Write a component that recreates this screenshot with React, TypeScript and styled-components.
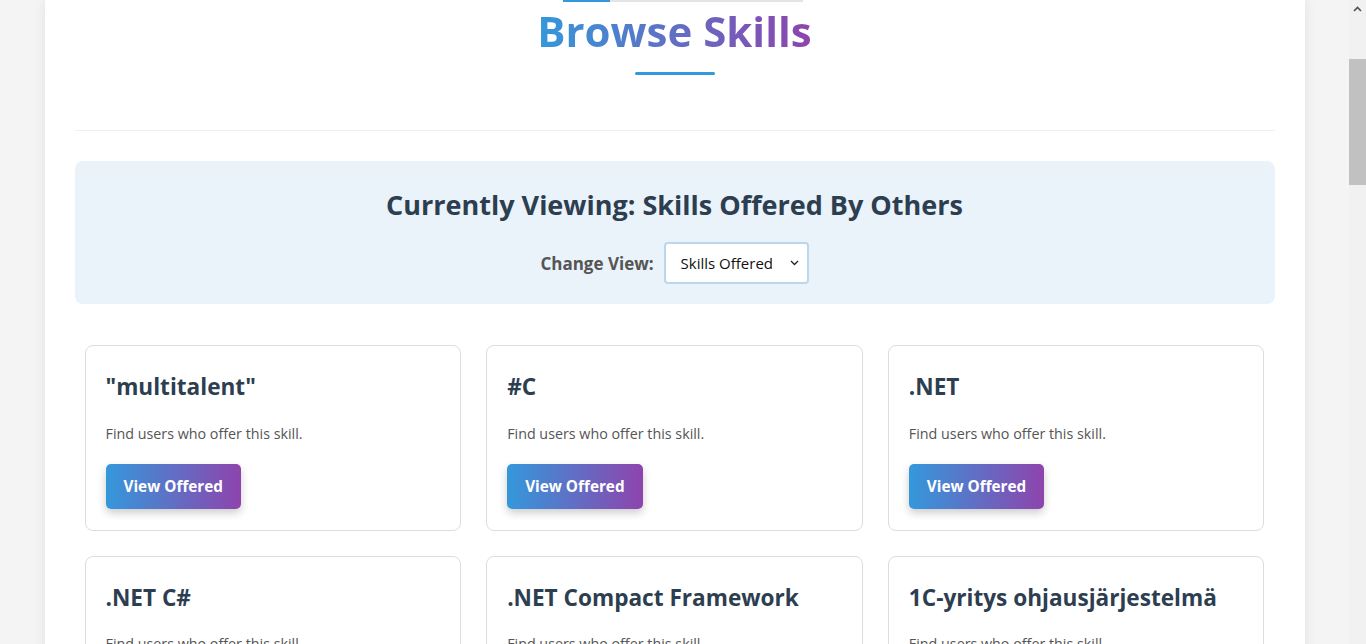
import React from "react"
import styled, { createGlobalStyle } from "styled-components"

const skills = [
  '"multitalent"',
  "#C",
  ".NET",
  ".NET C#",
  ".NET Compact Framework",
  "1C-yritys ohjausjärjestelmä",
]

const GlobalStyle = createGlobalStyle`
  html, body {
    margin: 0;
    padding: 0;
  }
  body {
    padding-right: 17px;
    background: #f4f4f4;
    font-family: "Open Sans", "Noto Sans", sans-serif;
    color: #333;
  }
`

const Container = styled.div`
  box-sizing: border-box;
  max-width: 1260px;
  margin: 0 auto;
  padding: 0 30px 30px;
  background: #fff;
  box-shadow: 0 0 12px rgba(0, 0, 0, 0.08);
`

const Track = styled.div`
  width: 240px;
  height: 2px;
  margin-left: calc(50% - 112px);
  background: #e4e4e4;
`

const TrackFill = styled.div`
  width: 47px;
  height: 100%;
  background: #3498db;
`

const Header = styled.header`
  display: flex;
  flex-direction: column;
  align-items: center;
  padding-bottom: 55px;
  border-bottom: 1px solid #eee;
`

const Title = styled.h1`
  margin: 4px 0 0;
  font-size: 42px;
  line-height: 1.2;
  font-weight: 700;
  background: linear-gradient(90deg, #3498db, #8e44ad);
  -webkit-background-clip: text;
  background-clip: text;
  color: transparent;
`

const TitleRule = styled.div`
  width: 80px;
  height: 3px;
  margin-top: 16px;
  border-radius: 2px;
  background: #3498db;
`

const ViewPanel = styled.section`
  margin-top: 30px;
  padding: 26px 20px 20px;
  border-radius: 8px;
  background: #eaf2fa;
  text-align: center;
`

const PanelHeading = styled.h2`
  margin: 0 0 20px;
  font-size: 27px;
  line-height: 1.3;
  font-weight: 700;
  color: #2c3e50;
`

const ViewRow = styled.div`
  display: flex;
  justify-content: center;
  align-items: center;
  gap: 10px;
`

const ViewLabel = styled.label`
  font-size: 17px;
  font-weight: 700;
  color: #555;
`

const SelectWrap = styled.div`
  position: relative;
  display: flex;
`

const Select = styled.select`
  box-sizing: border-box;
  width: 145px;
  height: 42px;
  padding: 0 22px 0 15px;
  appearance: none;
  border: 2px solid #b9d7ef;
  border-radius: 4px;
  background: #fff;
  font-family: inherit;
  font-size: 15px;
  color: #111;
`

const Chevron = styled.svg`
  position: absolute;
  right: 10px;
  top: 18px;
  pointer-events: none;
`

const Grid = styled.div`
  display: grid;
  grid-template-columns: repeat(3, 1fr);
  gap: 25px;
  padding: 41px 10px 10px;
`

const Card = styled.article`
  box-sizing: border-box;
  padding: 20px 20px 21px;
  border: 1px solid #ddd;
  border-radius: 8px;
  background: #fff;
`

const CardTitle = styled.h3`
  margin: 6px 0 22px;
  font-size: 22.6px;
  line-height: 1.3;
  font-weight: 700;
  color: #2c3e50;
`

const CardText = styled.p`
  margin: 0 0 20px;
  font-size: 14.3px;
  line-height: 1.4;
  color: #555;
`

const ViewButton = styled.button`
  height: 45px;
  padding: 0 18px;
  border: none;
  border-radius: 5px;
  background: linear-gradient(90deg, #3498db, #8e44ad);
  box-shadow: 0 4px 8px rgba(0, 0, 0, 0.2);
  font-family: inherit;
  font-size: 15.3px;
  font-weight: 700;
  color: #fff;
`

const ScrollBar = styled.div`
  position: fixed;
  top: 0;
  right: 0;
  width: 17px;
  height: 100vh;
  display: flex;
  flex-direction: column;
  background: #f1f1f1;
`

const ScrollArrow = styled.div`
  display: flex;
  align-items: center;
  justify-content: center;
  height: 17px;
`

const ScrollThumb = styled.div`
  height: 126px;
  margin-top: 42px;
  background: #c1c1c1;
`

export default function App() {
  return (
    <>
      <GlobalStyle />
      <Container>
        <Track>
          <TrackFill />
        </Track>
        <Header>
          <Title>Browse Skills</Title>
          <TitleRule />
        </Header>
        <ViewPanel>
          <PanelHeading>Currently Viewing: Skills Offered By Others</PanelHeading>
          <ViewRow>
            <ViewLabel htmlFor="view">Change View:</ViewLabel>
            <SelectWrap>
              <Select id="view" defaultValue="offered">
                <option value="offered">Skills Offered</option>
                <option value="wanted">Skills Wanted</option>
              </Select>
              <Chevron width="9" height="6" viewBox="0 0 9 6">
                <path d="M1 1l3.5 3.5L8 1" fill="none" stroke="#222" strokeWidth="1.3" />
              </Chevron>
            </SelectWrap>
          </ViewRow>
        </ViewPanel>
        <Grid>
          {skills.map(skill => (
            <Card key={skill}>
              <CardTitle>{skill}</CardTitle>
              <CardText>Find users who offer this skill.</CardText>
              <ViewButton>View Offered</ViewButton>
            </Card>
          ))}
        </Grid>
      </Container>
      <ScrollBar>
        <ScrollArrow>
          <svg width="9" height="6" viewBox="0 0 9 6">
            <path d="M1 5l3.5-3.5L8 5" fill="none" stroke="#505050" strokeWidth="1.6" />
          </svg>
        </ScrollArrow>
        <ScrollThumb />
      </ScrollBar>
    </>
  )
}
